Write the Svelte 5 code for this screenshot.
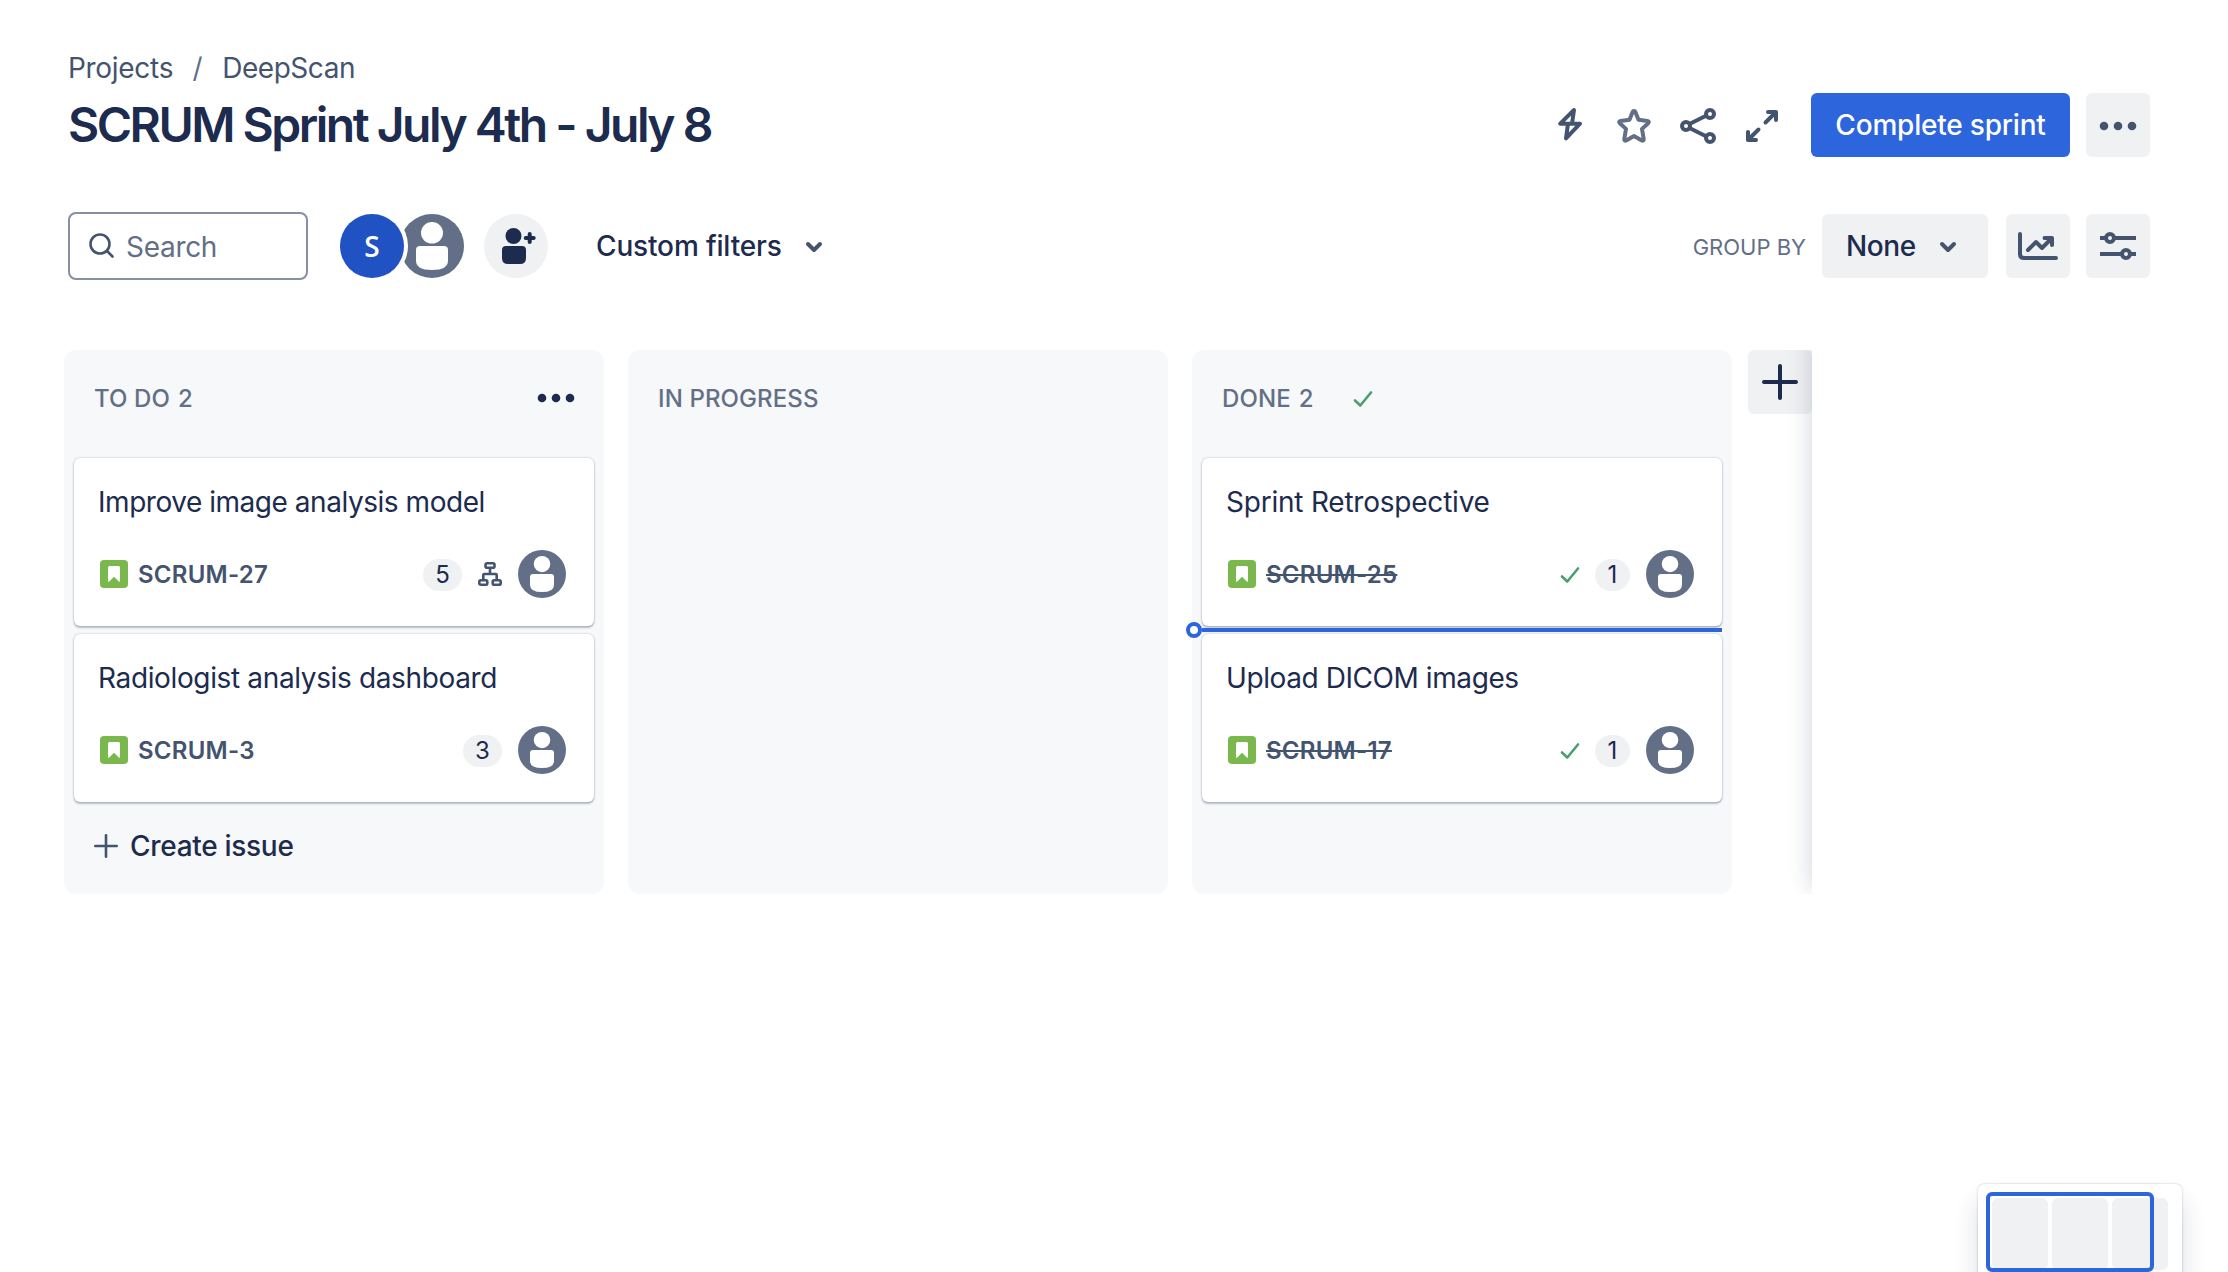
<script>
  const columns = [
    {
      name: 'TO DO', count: 2, menu: true, create: true,
      cards: [
        { title: 'Improve image analysis model', tracking: -0.46, key: 'SCRUM-27', points: 5, tree: true },
        { title: 'Radiologist analysis dashboard', tracking: -0.36, key: 'SCRUM-3', points: 3 }
      ]
    },
    { name: 'IN PROGRESS', cards: [] },
    {
      name: 'DONE', count: 2, done: true,
      cards: [
        { title: 'Sprint Retrospective', tracking: -0.22, key: 'SCRUM-25', points: 1, done: true },
        { title: 'Upload DICOM images', tracking: -0.42, key: 'SCRUM-17', points: 1, done: true, drop: true }
      ]
    }
  ];
</script>

{#snippet person(size)}
  <svg class="person" width={size} height={size} viewBox="0 0 64 64">
    <circle cx="32" cy="32" r="32" fill="#626f86" />
    <ellipse cx="32" cy="18.8" rx="11" ry="10.8" fill="#fff" />
    <path d="M16 36q0-4 4-4h24q4 0 4 4v10.500q0 9.500-16 9.500t-16-9.500z" fill="#fff" />
  </svg>
{/snippet}

{#snippet check()}
  <svg class="check" width="20" height="18" viewBox="0 0 20 18">
    <path d="M2 10.500 7.300 15.500 18 2.500" fill="none" stroke="#4a9f70" stroke-width="2.600" stroke-linecap="round" stroke-linejoin="round" />
  </svg>
{/snippet}

{#snippet chevron()}
  <svg width="20" height="14" viewBox="0 0 20 14">
    <path d="M4 5 10 11 16 5" fill="none" stroke="#44546f" stroke-width="4" stroke-linecap="round" stroke-linejoin="round" />
  </svg>
{/snippet}

{#snippet dots(color)}
  <svg width="40" height="12" viewBox="0 0 40 12" fill={color}>
    <circle cx="6" cy="6" r="4.300" /><circle cx="20" cy="6" r="4.300" /><circle cx="34" cy="6" r="4.300" />
  </svg>
{/snippet}

<main>
  <nav><span class="t-projects">Projects</span><span class="slash">/</span><span class="t-deep">DeepScan</span></nav>

  <header>
    <h1>SCRUM Sprint July 4th - July 8</h1>
    <div class="actions">
      <button class="plain" aria-label="Automation">
        <svg width="48" height="48" viewBox="0 0 48 48" fill="none" stroke="#44546f" stroke-width="4" stroke-linejoin="round" stroke-linecap="round">
          <path d="M26 21.700 28 8 14.200 21.700H34L20 36.300 22 21.700" />
        </svg>
      </button>
      <button class="plain" aria-label="Star">
        <svg width="48" height="48" viewBox="0 0 48 48" fill="none" stroke="#626f86" stroke-width="4" stroke-linejoin="round">
          <path d="M24 9Q25 9 25.500 10.200L28.500 17.800 37.300 18.900Q39.800 19.500 38.200 21.200L32 26.900 33.700 37Q33.800 39.300 31.800 38.400L24 34 16.200 38.400Q14.200 39.300 14.300 37L16 26.900 9.800 21.200Q8.200 19.500 10.700 18.900L19.500 17.800 22.500 10.200Q23 9 24 9Z" />
        </svg>
      </button>
      <button class="plain" aria-label="Share">
        <svg width="48" height="48" viewBox="0 0 48 48" fill="none" stroke="#44546f" stroke-width="4">
          <circle cx="12" cy="24" r="4" /><circle cx="36" cy="12" r="4" /><circle cx="36" cy="36" r="4" />
          <path d="M15.500 22 32.500 13.500M15.500 26 32.500 34.500" />
        </svg>
      </button>
      <button class="plain" aria-label="Full screen">
        <svg width="48" height="48" viewBox="0 0 48 48" fill="none" stroke="#44546f" stroke-width="4" stroke-linecap="round" stroke-linejoin="round">
          <path d="M30 10h8v8M37 11 27.500 20.500M10 30v8h8M11 37 20.500 27.500" />
        </svg>
      </button>
      <button class="primary"><span class="t-complete">Complete sprint</span></button>
      <button class="square more" aria-label="More">{@render dots('#44546f')}</button>
    </div>
  </header>

  <section class="toolbar">
    <div class="search">
      <svg width="28" height="28" viewBox="0 0 28 28" fill="none" stroke="#44546f" stroke-width="2.600" stroke-linecap="round">
        <circle cx="12" cy="12" r="9.500" /><path d="M19 19 24.500 24.500" />
      </svg>
      <span class="t-search">Search</span>
    </div>
    <div class="people">
      <span class="initial">S</span>
      <span class="other">{@render person(64)}</span>
    </div>
    <button class="add-person" aria-label="Add people">
      <svg width="64" height="64" viewBox="0 0 64 64" fill="#1c2b4e">
        <circle cx="29.500" cy="22" r="8" />
        <path d="M18 36q0-4 4-4h16q4 0 4 4v8q0 6-6 6H24q-6 0-6-6z" />
        <path d="M45.700 20v8M41.700 24h8" stroke="#1c2b4e" stroke-width="4" stroke-linecap="round" />
      </svg>
    </button>
    <button class="custom"><span class="t-custom">Custom filters</span>{@render chevron()}</button>
    <div class="right">
      <span class="group">GROUP BY</span>
      <button class="none"><span class="t-none">None</span>{@render chevron()}</button>
      <button class="square insights" aria-label="Insights">
        <svg width="48" height="48" viewBox="0 0 48 48" fill="none" stroke="#44546f" stroke-width="4" stroke-linecap="round" stroke-linejoin="round">
          <path d="M6 12v20q0 4 4 4h32M14 28 22 20 28 26 37 17M30.500 16H38v7" />
        </svg>
      </button>
      <button class="square" aria-label="View settings">
        <svg width="48" height="48" viewBox="0 0 48 48" fill="none" stroke="#44546f" stroke-width="4">
          <path d="M6 16h6M20 16h22M6 32h22M36 32h6" /><circle cx="16" cy="16" r="4" /><circle cx="32" cy="32" r="4" />
        </svg>
      </button>
    </div>
  </section>

  <section class="board">
    {#each columns as column}
      <article class="column">
        <div class="head">
          <h2>{column.name}{#if column.count}<span>{column.count}</span>{/if}</h2>
          {#if column.done}{@render check()}{/if}
          {#if column.menu}<div class="menu">{@render dots('#1c2b4e')}</div>{/if}
        </div>
        {#each column.cards as card}
          <div class="card">
            {#if card.drop}<i class="drop"></i>{/if}
            <p style:letter-spacing="{card.tracking}px">{card.title}</p>
            <div class="meta">
              <svg class="story" width="28" height="28" viewBox="0 0 28 28">
                <rect width="28" height="28" rx="4" fill="#7ab84d" />
                <path d="M8 7.500Q8 6 9.500 6h9Q20 6 20 7.500V20.500Q20 22.500 18.600 21.200L14 16.800 9.400 21.200Q8 22.500 8 20.500z" fill="#fff" />
              </svg>
              <span class="key" class:struck={card.done}>{card.key}</span>
              <div class="facts">
                {#if card.done}{@render check()}{/if}
                <span class="points" class:one={card.points === 1}>{card.points}</span>
                {#if card.tree}
                  <svg class="tree" width="24" height="24" viewBox="1 1 24 24" fill="none" stroke="#44546f" stroke-width="2.600">
                    <rect x="8.500" y="2.300" width="9" height="4.500" rx="1.500" /><rect x="2.300" y="19.200" width="8" height="4.500" rx="1.500" /><rect x="15.700" y="19.200" width="8" height="4.500" rx="1.500" />
                    <path d="M13 7v6M6.300 19V14q0-1 1-1h11.400q1 0 1 1v5" />
                  </svg>
                {/if}
                {@render person(48)}
              </div>
            </div>
          </div>
        {/each}
        {#if column.create}
          <button class="create">
            <svg width="24" height="24" viewBox="0 0 24 24" stroke="#44546f" stroke-width="2.600" stroke-linecap="round"><path d="M12 1.300v21.400M1.300 12h21.400" /></svg>
            <span class="t-create">Create issue</span>
          </button>
        {/if}
      </article>
    {/each}
    <div class="edge">
      <button class="add-column" aria-label="Add column">
        <svg width="40" height="40" viewBox="0 0 40 40" stroke="#1c2b4e" stroke-width="4" stroke-linecap="round"><path d="M20 4v32M4 20h32" /></svg>
      </button>
    </div>
  </section>

  <aside><div class="map"><i></i><i></i><i></i></div><div class="viewport"></div></aside>
</main>

<style>
  :global(body) { background: #fff; overflow: hidden; }
  main {
    position: relative; box-sizing: border-box; width: 2228px; height: 1272px; overflow: hidden;
    padding: 48px 78px 0 64px; color: #1c2b4e; font: 28px/40px Inter, sans-serif;
  }
  button { display: flex; align-items: center; justify-content: center; border: 0; padding: 0; background: none; color: inherit; font: inherit; font-weight: 500; }
  svg { display: block; flex: none; }
  h1, h2, p { margin: 0; }
  span { white-space: nowrap; }
  nav { display: flex; height: 40px; padding-left: 4px; color: #44546f; }
  .t-projects { letter-spacing: -.3px; }
  .t-deep { letter-spacing: -.45px; }
  .slash { width: 49px; text-align: center; color: #626f86; }
  header { display: flex; justify-content: space-between; height: 64px; margin-top: 5px; padding-left: 4px; }
  h1 { font-size: 48px; line-height: 64px; font-weight: 600; letter-spacing: -2.500px; white-space: nowrap; }
  .actions { display: flex; }
  .plain { width: 64px; padding-top: 2px; }
  .primary { width: 259px; margin: 0 16px 0 17px; border-radius: 6px; background: #2d65dc; color: #fff; }
  .t-complete { font-weight: 550; letter-spacing: -.2px; }
  .square { width: 64px; height: 64px; border-radius: 6px; background: #f0f1f3; }
  .more { padding-top: 2px; }
  .toolbar { display: flex; align-items: center; height: 68px; margin-top: 55px; padding-left: 4px; }
  .search { box-sizing: border-box; display: flex; align-items: center; width: 240px; height: 68px; padding-left: 18px; gap: 10px; border: 2px solid #8590a2; border-radius: 8px; color: #626f86; }
  .t-search { padding-top: 2px; letter-spacing: -.3px; }
  .people { display: flex; margin-left: 32px; }
  .initial { z-index: 1; width: 64px; height: 64px; border-radius: 50%; background: #2052c4; box-shadow: 0 0 0 4px #fff; color: #fff; font: 600 28px/64px "Open Sans", sans-serif; text-align: center; }
  .other { margin-left: -4px; }
  .add-person { width: 64px; height: 64px; margin-left: 20px; border-radius: 50%; background: #f0f1f3; }
  .custom { margin-left: 48px; gap: 22px; }
  .t-custom { letter-spacing: -.15px; }
  .right { display: flex; align-items: center; margin-left: auto; }
  .group { margin-right: 16px; padding-top: 2px; color: #626f86; font-size: 22px; }
  .none { box-sizing: border-box; justify-content: flex-start; width: 166px; height: 64px; padding-left: 24px; gap: 22px; border-radius: 6px; background: #f0f1f3; }
  .t-none { letter-spacing: -.4px; }
  .insights { margin: 0 16px 0 18px; }
  .board { display: flex; gap: 24px; height: 544px; margin-top: 70px; }
  .column { box-sizing: border-box; width: 540px; padding: 0 10px; border-radius: 12px; background: #f7f8fa; }
  .head { display: flex; align-items: center; height: 96px; margin-bottom: 12px; padding: 0 20px; }
  h2 { padding-top: 2px; color: #626f86; font-size: 24px; line-height: 32px; font-weight: 500; letter-spacing: .1px; white-space: nowrap; }
  h2 span { margin-left: 8px; }
  .head .check { margin: 2px 0 0 39px; }
  .menu { margin-left: auto; margin-right: -2px; }
  .card { position: relative; box-sizing: border-box; height: 168px; margin-bottom: 8px; padding: 24px 28px 0 24px; border-radius: 6px; background: #fff; box-shadow: 0 2px 2px rgba(9, 30, 66, .25), 0 0 2px rgba(9, 30, 66, .31); }
  .card p { line-height: 40px; white-space: nowrap; }
  .meta { display: flex; align-items: center; height: 48px; margin-top: 28px; padding-left: 2px; }
  .key { margin-left: 10px; padding-top: 2px; color: #44546f; font-size: 24px; font-weight: 600; letter-spacing: .25px; }
  .struck { text-decoration: line-through; text-decoration-thickness: 2px; }
  .facts { display: flex; align-items: center; margin-left: auto; gap: 16px; }
  .facts .check { margin: 2px -1px 0 0; }
  .points { width: 39px; height: 32px; margin-top: 2px; border-radius: 16px; background: #f0f1f3; font-size: 24px; line-height: 32px; text-align: center; }
  .one { width: 35px; }
  .drop { position: absolute; left: 0; right: 0; top: -6px; height: 4px; background: #2d65dc; }
  .drop::before { content: ''; position: absolute; left: -16px; top: -6px; width: 8px; height: 8px; border: 4px solid #2d65dc; border-radius: 50%; background: #fff; }
  .create { height: 64px; margin-top: 12px; padding-left: 20px; gap: 12px; }
  .t-create { letter-spacing: -.3px; }
  .edge { position: relative; width: 64px; margin-left: -8px; overflow: hidden; }
  .edge::after { content: ''; position: absolute; left: 64px; top: -20px; bottom: 6px; width: 60px; box-shadow: 0 0 24px rgba(9, 30, 66, .2); }
  .add-column { width: 64px; height: 64px; border-radius: 6px; background: #f0f1f3; }
  aside { position: absolute; left: 1978px; top: 1184px; width: 204px; height: 120px; border-radius: 6px; background: #fff; box-shadow: 0 16px 24px rgba(9, 30, 66, .15), 0 0 2px rgba(9, 30, 66, .31); }
  .map { display: flex; gap: 4px; padding: 14px; }
  .map i { width: 56px; height: 72px; border-radius: 6px; background: #f0f1f3; }
  .viewport { position: absolute; left: 8px; top: 8px; width: 160px; height: 72px; border: 4px solid #2d65dc; border-radius: 6px; }
</style>
